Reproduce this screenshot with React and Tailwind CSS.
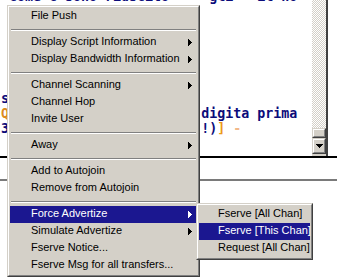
import React from "react";

const MENU = [
  { label: "File Push" },
  { sep: true },
  { label: "Display Script Information", sub: true },
  { label: "Display Bandwidth Information", sub: true },
  { sep: true },
  { label: "Channel Scanning", sub: true },
  { label: "Channel Hop" },
  { label: "Invite User" },
  { sep: true },
  { label: "Away", sub: true },
  { sep: true },
  { label: "Add to Autojoin" },
  { label: "Remove from Autojoin" },
  { sep: true },
  { label: "Force Advertize", sub: true, active: true },
  { label: "Simulate Advertize", sub: true },
  { label: "Fserve Notice..." },
  { label: "Fserve Msg for all transfers..." },
];

const SUBMENU = [
  { label: "Fserve [All Chan]" },
  { label: "Fserve [This Chan]", active: true },
  { label: "Request [All Chan]" },
];

const GAP = "                        ";

function RightArrow() {
  return (
    <svg width="4" height="7" viewBox="0 0 4 7" shapeRendering="crispEdges" fill="currentColor">
      <path d="M0 0h1v7H0z M1 1h1v5H1z M2 2h1v3H2z M3 3h1v1H3z" />
    </svg>
  );
}

function DownArrow() {
  return (
    <svg width="7" height="4" viewBox="0 0 7 4" shapeRendering="crispEdges" fill="#000">
      <path d="M0 0h7v1H0z M1 1h5v1H1z M2 2h3v1H2z M3 3h1v1H3z" />
    </svg>
  );
}

function Raised({ className = "", innerClass = "", children }) {
  return (
    <div
      className={`border border-t-[#d4d0c8] border-l-[#d4d0c8] border-b-[#404040] border-r-[#404040] bg-[#d4d0c8] ${className}`}
    >
      <div
        className={`h-full border border-t-white border-l-white border-b-[#808080] border-r-[#808080] ${innerClass}`}
      >
        {children}
      </div>
    </div>
  );
}

function Menu({ items, className, pad }) {
  return (
    <Raised className={className} innerClass="p-px">
      {items.map((item, i) =>
        item.sep ? (
          <div key={i} className="h-[9px] flex items-center px-px">
            <div className="w-full h-[2px] border-t border-t-[#808080] border-b border-b-white" />
          </div>
        ) : (
          <div
            key={i}
            className={`h-[17px] flex items-center justify-between pr-[5px] whitespace-nowrap ${pad} ${
              item.active ? "bg-[#1b1790] text-white" : "text-black"
            }`}
          >
            <span className="leading-[13px] pb-[3px]">{item.label}</span>
            {item.sub && <RightArrow />}
          </div>
        )
      )}
    </Raised>
  );
}

export default function App() {
  return (
    <div className="relative w-[337px] h-[280px] overflow-hidden bg-white font-['Liberation_Sans',Arial,sans-serif] text-[11px]">
      <div className="flex h-[158px] border-b-2 border-b-black">
        <div className="flex-1 overflow-hidden font-['DejaVu_Sans_Mono',monospace] font-bold text-[13.3px] leading-[15px] text-[#0c0c7a] whitespace-pre pl-px">
          <div className="mt-[-11px]">{" come c sono riuscito     gli * il no"}</div>
          <div className="mt-[87px]">s</div>
          <div>
            <span className="text-[#dc8c1c]">Q</span>
            {GAP}digita prima
          </div>
          <div>
            3{GAP}!)<span className="text-[#ec9a1a]">]</span> <span className="text-[#f2b98a]">-</span>
          </div>
        </div>
        <div className="w-[14px] flex flex-col">
          <div className="flex-1 bg-[repeating-conic-gradient(#d4d0c8_0_25%,#ffffff_0_50%)] bg-[length:2px_2px]" />
          <Raised className="h-[10px]" />
          <Raised className="h-[16px]" innerClass="flex items-center justify-center">
            <DownArrow />
          </Raised>
          <div className="h-[2px] bg-[#d4d0c8]" />
        </div>
        <div className="w-[2px] bg-[#404040]" />
        <div className="w-[9px]" />
      </div>
      <div className="h-[21px]" />
      <div className="h-[2px] bg-[#7a7a7a]" />

      <Menu items={MENU} className="absolute left-[7px] top-[5px] w-[193px]" pad="pl-[21px]" />
      <Menu items={SUBMENU} className="absolute left-[196px] top-[203px] w-[117px]" pad="pl-[19px]" />
    </div>
  );
}
